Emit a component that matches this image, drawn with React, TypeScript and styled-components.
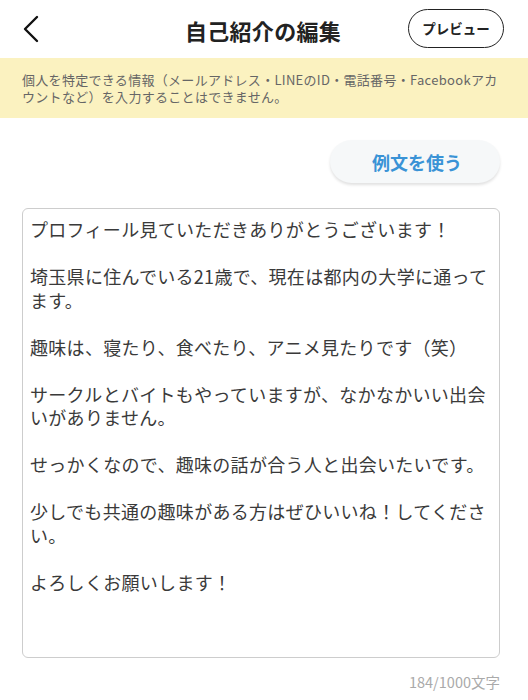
import styled, { createGlobalStyle } from 'styled-components';

const introText = `プロフィール見ていただきありがとうございます！

埼玉県に住んでいる21歳で、現在は都内の大学に通ってます。

趣味は、寝たり、食べたり、アニメ見たりです（笑）

サークルとバイトもやっていますが、なかなかいい出会いがありません。

せっかくなので、趣味の話が合う人と出会いたいです。

少しでも共通の趣味がある方はぜひいいね！してください。

よろしくお願いします！`;

export default function App() {
  return (
    <>
      <GlobalStyle />
      <Page>
        <Header>
          <BackButton aria-label="戻る">
            <svg width="20" height="28" viewBox="0 0 20 28" fill="none">
              <polyline
                points="15,2 3,14 15,26"
                stroke="#111"
                strokeWidth="2.4"
                strokeLinecap="round"
                strokeLinejoin="round"
              />
            </svg>
          </BackButton>
          <Title>自己紹介の編集</Title>
          <PreviewWrap>
            <PreviewButton>プレビュー</PreviewButton>
          </PreviewWrap>
        </Header>
        <Notice>
          個人を特定できる情報（メールアドレス・LINEのID・電話番号・Facebookアカウントなど）を入力することはできません。
        </Notice>
        <Content>
          <SampleRow>
            <SampleButton>例文を使う</SampleButton>
          </SampleRow>
          <Editor defaultValue={introText} />
          <Counter>184/1000文字</Counter>
        </Content>
      </Page>
    </>
  );
}

const GlobalStyle = createGlobalStyle`
  body {
    margin: 0;
    background: #fff;
    font-family: 'Noto Sans CJK JP', 'Noto Sans', sans-serif;
  }
`;

const Page = styled.main`
  width: 528px;
  height: 700px;
  display: flex;
  flex-direction: column;
  background: #fff;
`;

const Header = styled.header`
  height: 58px;
  display: grid;
  grid-template-columns: 1fr auto 1fr;
  align-items: center;
  padding: 0 24px 0 22px;
  box-sizing: border-box;
`;

const BackButton = styled.button`
  justify-self: start;
  display: flex;
  align-items: center;
  padding: 0;
  border: none;
  background: none;
`;

const Title = styled.h1`
  margin: 2px 0 0;
  font-size: 22px;
  font-weight: 700;
  color: #222;
  letter-spacing: 0.3px;
`;

const PreviewWrap = styled.div`
  display: flex;
  justify-content: flex-end;
`;

const PreviewButton = styled.button`
  height: 39px;
  width: 96px;
  margin-top: -2px;
  border: 1.5px solid #222;
  border-radius: 20px;
  background: #fff;
  font-family: inherit;
  font-size: 13.5px;
  font-weight: 700;
  color: #222;
  padding: 0;
`;

const Notice = styled.p`
  margin: 0;
  height: 60px;
  box-sizing: border-box;
  padding: 14px 26px 0 22px;
  background: #fbf2c0;
  color: #666;
  font-size: 13px;
  letter-spacing: 0.3px;
  line-height: 16.5px;
`;

const Content = styled.section`
  display: flex;
  flex-direction: column;
  padding: 22px 28px 0 22px;
`;

const SampleRow = styled.div`
  display: flex;
  justify-content: flex-end;
`;

const SampleButton = styled.button`
  width: 170px;
  height: 43px;
  border: none;
  border-radius: 22px;
  background: #f6f8f9;
  box-shadow: 0 2px 3px rgba(0, 0, 0, 0.12);
  font-family: inherit;
  font-size: 18px;
  font-weight: 700;
  color: #3a93d6;
  padding: 0 0 0 4px;
`;

const Editor = styled.textarea`
  margin-top: 25px;
  height: 450px;
  box-sizing: border-box;
  border: 1px solid #cdcdcd;
  border-radius: 6px;
  padding: 9px 4px 0 7px;
  resize: none;
  font-family: inherit;
  font-size: 18px;
  letter-spacing: 0.3px;
  line-height: 23.5px;
  color: #3a3a3a;
  outline: none;
`;

const Counter = styled.div`
  margin-top: 13px;
  text-align: right;
  font-size: 14.5px;
  color: #aaa;
`;
